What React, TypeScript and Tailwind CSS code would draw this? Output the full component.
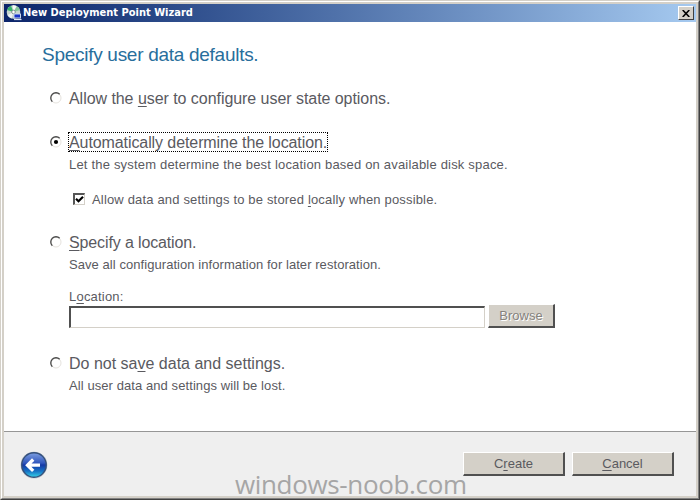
import { ReactNode } from "react";

interface OptionProps {
  checked?: boolean
  className?: string
  children: ReactNode
}

const Radio = ({ checked }: { checked?: boolean }) => {
  return <svg className="w-3 h-3 shrink-0" viewBox="0 0 12 12" fill="none">
    <circle cx="6" cy="6" r="5" fill="#fff" stroke="#e6e3de" />
    <path d="M2.3 9.7A5 5 0 0 1 9.7 2.3" stroke="#4a4a4a" strokeWidth="1.3" />
    {checked && <circle cx="6" cy="6" r="2.1" fill="#000" />}
  </svg>
}

const Option = ({ checked, className, children }: OptionProps) => {
  return <div className="flex items-center h-5 ml-px">
    <Radio checked={checked} />
    <div className={`ml-[6px] h-5 border border-dotted text-base leading-5 ${checked ? "border-black" : "border-transparent"} ${className}`}>
      {children}
    </div>
  </div>
}

const Key = ({ children }: { children: ReactNode }) => {
  return <span className="underline underline-offset-2 decoration-1">{children}</span>
}

const Button = ({ className, children }: { className: string, children: ReactNode }) => {
  return <button className={`h-6 bg-[#d4d0c8] border-t border-l border-white border-r-2 border-b-2 border-r-[#505050] border-b-[#505050] text-[13px] leading-5 ${className}`}>
    {children}
  </button>
}

const TitleBar = () => {
  return <div className="flex items-center h-[18px] shrink-0 pl-[2px] pr-[2px] bg-linear-to-r from-[#0c246a] to-[#a6caf0]">
    <svg className="w-4 h-4" viewBox="0 0 16 16">
      <circle cx="7.5" cy="7" r="6.8" fill="#c8d5cf" />
      <path d="M7.5 7 1 5A7 7 0 0 1 5 .8Z" fill="#35b56a" />
      <path d="M7.5 7 6.5 .3A7 7 0 0 1 10.5 1Z" fill="#f3fbf5" />
      <path d="M7.5 7 11 1.2A7 7 0 0 1 14 5Z" fill="#84c79b" />
      <path d="M7.5 7 1.5 10A7 7 0 0 0 5.5 13.5Z" fill="#eef3f4" />
      <circle cx="7.5" cy="7" r="1.8" fill="#fff" stroke="#7c9190" />
      <rect x="7.5" y="8.5" width="7.5" height="5" fill="#c9d7ee" />
      <rect x="8.5" y="9.5" width="5.5" height="3" fill="#1732c8" />
      <path d="M8 14.5h7.5" stroke="#dce6f5" strokeWidth="1.2" />
    </svg>
    <span className="ml-[1px] text-[11px] font-bold text-white font-['DejaVu_Sans_Condensed','DejaVu_Sans',sans-serif] whitespace-nowrap">New Deployment Point Wizard</span>
    <button className="ml-auto w-4 h-[14px] flex items-center justify-center bg-[#d4d0c8] border border-white border-r-[#404040] border-b-[#404040]">
      <svg className="w-2 h-[7px]" viewBox="0 0 8 7">
        <path d="M.7 0 7.3 7M7.3 0 .7 7" stroke="#000" strokeWidth="1.6" />
      </svg>
    </button>
  </div>
}

const BackButton = () => {
  return <svg className="w-7 h-7" viewBox="0 0 28 28">
    <defs>
      <linearGradient id="back" x1="0" y1="0" x2="0" y2="1">
        <stop offset="0" stopColor="#7c9de0" />
        <stop offset=".42" stopColor="#3157bd" />
        <stop offset=".5" stopColor="#1538a5" />
        <stop offset=".75" stopColor="#1672c5" />
        <stop offset="1" stopColor="#35d3e8" />
      </linearGradient>
    </defs>
    <circle cx="14" cy="14" r="13.3" fill="#a9b2bd" />
    <circle cx="14" cy="14" r="12.2" fill="url(#back)" stroke="#34507c" strokeWidth="1.4" />
    <path d="M13.2 8.5 7.5 14.2l5.7 5.7M8 14.2H20" fill="none" stroke="#fff" strokeWidth="3.3" />
  </svg>
}

const App = () => {
  return <div className="relative w-[700px] h-[500px] border border-[#d4d0c8] border-r-[#404040] border-b-[#404040] font-['Liberation_Sans',Arial,sans-serif] text-[#5a5a5f]">
    <div className="h-full border border-white border-r-[#808080] border-b-[#808080]">
      <div className="h-full flex flex-col bg-white border-2 border-[#d4d0c8]">
        <TitleBar />
        <div className="flex-1 pl-[45px] pt-[21px] whitespace-nowrap">
          <h1 className="-ml-[7px] h-6 text-[19px] leading-6 tracking-[-0.28px] text-[#286e9c]">Specify user data defaults.</h1>
          <div className="mt-[21px]">
            <Option className="tracking-[-0.05px]">Allow the <Key>u</Key>ser to configure user state options.</Option>
          </div>
          <div className="mt-6">
            <Option checked className="tracking-[-0.09px]"><Key>A</Key>utomatically determine the location.</Option>
            <p className="ml-5 mt-[5px] text-[13px] leading-4 tracking-[0.19px]">Let the system determine the best location based on available disk space.</p>
            <label className="ml-6 mt-[18px] flex items-center h-4 text-[13px]">
              <span className="w-3 h-3 border-t-2 border-l-2 border-[#555] border-r border-b border-r-[#d4d0c8] border-b-[#d4d0c8]">
                <svg className="w-[9px] h-[9px]" viewBox="0 0 9 9">
                  <path d="M1 3.8 3.5 6.3 8 1.8" fill="none" stroke="#000" strokeWidth="2.2" />
                </svg>
              </span>
              <span className="ml-[7px] mt-px tracking-[0.17px]">Allow data and settings to be stored <Key>l</Key>ocally when possible.</span>
            </label>
          </div>
          <div className="mt-[25px]">
            <Option className="tracking-[-0.13px]"><Key>S</Key>pecify a location.</Option>
            <p className="ml-5 mt-[5px] text-[13px] leading-4 tracking-[0.06px]">Save all configuration information for later restoration.</p>
            <p className="ml-5 mt-4 text-[13px] leading-4 tracking-[0.2px]">L<Key>o</Key>cation:</p>
            <div className="ml-5 -mt-px flex items-end">
              <input className="w-[416px] h-[22px] bg-white border-t-2 border-l-2 border-[#505050] border-r border-b border-r-[#d4d0c8] border-b-[#d4d0c8] outline-none" />
              <Button className="ml-[3px] w-[67px] text-[#85827d] [text-shadow:1px_1px_0_#fff]">Browse</Button>
            </div>
          </div>
          <div className="mt-[25px]">
            <Option>Do not sa<Key>v</Key>e data and settings.</Option>
            <p className="ml-5 mt-[5px] text-[13px] leading-4 tracking-[0.08px]">All user data and settings will be lost.</p>
          </div>
        </div>
        <div className="h-[65px] shrink-0 flex items-start bg-[#efefef] border-t border-[#969696] pl-4 pr-[22px]">
          <div className="mt-[19px]"><BackButton /></div>
          <div className="ml-auto mt-5 flex gap-[7px]">
            <Button className="w-[102px]">C<Key>r</Key>eate</Button>
            <Button className="w-[102px]"><Key>C</Key>ancel</Button>
          </div>
        </div>
      </div>
    </div>
    <span className="absolute left-[234px] top-[467px] text-[26px] leading-8 tracking-[-0.35px] text-[#a6a6a6] font-['Open_Sans',sans-serif] whitespace-nowrap">windows-noob.com</span>
  </div>
}

export default App;
